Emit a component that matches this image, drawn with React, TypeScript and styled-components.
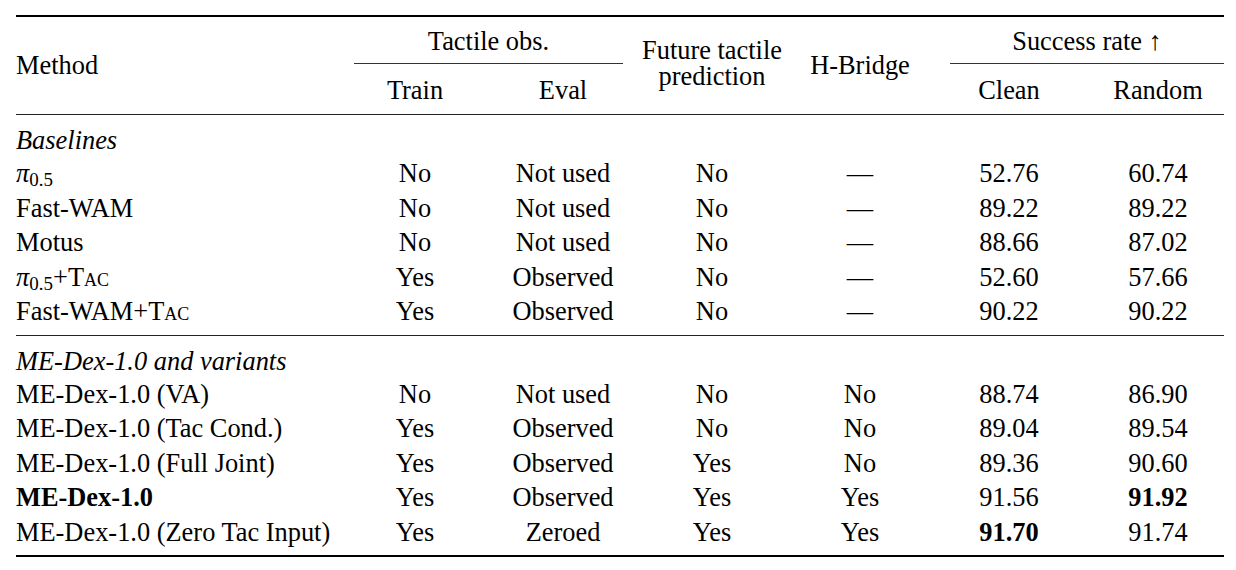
import React from "react";
import styled, { createGlobalStyle } from "styled-components";

const SERIF = `"Liberation Serif", Tinos, "Times New Roman", Times, "Nimbus Roman", "DejaVu Serif", serif`;

const Global = createGlobalStyle`
  html, body { margin: 0; padding: 0; background: #fff; }
  body { font-family: ${SERIF}; color: #000; }
`;

const Page = styled.div`
  padding: 15px 12px 0 16px;
  width: 1236px;
  box-sizing: border-box;
  font-family: ${SERIF};
`;

const Table = styled.table`
  width: 1208px;
  table-layout: fixed;
  border-collapse: collapse;
  font-family: ${SERIF};
  font-size: 26.4px;
  color: #000;
`;

const Head = styled.thead`
  border-top: 2px solid #000;
  border-bottom: 1px solid #222;
`;

const Body = styled.tbody<{ $last?: boolean }>`
  border-bottom: ${(p) => (p.$last ? "2px solid #000" : "1px solid #222")};
  & > tr:last-child > td { padding-bottom: 6px; }
`;

const Th = styled.th<{ $align?: string; $pl?: number; $pb?: number }>`
  font-weight: normal;
  font-family: ${SERIF};
  padding: 0 0 ${(p) => p.$pb ?? 0}px ${(p) => p.$pl ?? 0}px;
  text-align: ${(p) => p.$align ?? "center"};
  vertical-align: middle;
  line-height: 26.4px;
  white-space: nowrap;
`;

const SubTh = styled(Th)`
  height: 48px;
  line-height: 48px;
  padding-top: 2px;
  box-sizing: border-box;
`;

const GroupHead = styled.div<{ $ml: number; $mr: number }>`
  height: 47px;
  box-sizing: border-box;
  padding-top: 3px;
  display: flex;
  align-items: center;
  justify-content: center;
  border-bottom: 1px solid #333;
  margin: 0 ${(p) => p.$mr}px 0 ${(p) => p.$ml}px;
`;

const Td = styled.td<{ $align?: string; $bold?: boolean; $pl?: number }>`
  padding: 0 0 0 ${(p) => p.$pl ?? 0}px;
  height: 34.5px;
  line-height: 34.5px;
  font-family: ${SERIF};
  text-align: ${(p) => p.$align ?? "center"};
  font-weight: ${(p) => (p.$bold ? "bold" : "normal")};
  white-space: nowrap;
  vertical-align: middle;
`;

const GroupLabel = styled.td`
  padding: 9px 0 0 0;
  line-height: 32px;
  font-style: italic;
  font-family: ${SERIF};
  white-space: nowrap;
`;

const Pi = styled.span`
  font-style: italic;
`;

const Sub = styled.span`
  font-size: 0.72em;
  line-height: 0;
  vertical-align: -0.22em;
`;

const SmallCaps = styled.span`
  font-variant: small-caps;
  line-height: 0;
`;

const Bold = styled.span`
  font-weight: bold;
`;

type Row = {
  name: React.ReactNode;
  train: string;
  evalv: string;
  future: string;
  bridge: string;
  clean: string;
  random: string;
  cleanBold?: boolean;
  randomBold?: boolean;
};

const PiHalf = () => (
  <>
    <Pi>π</Pi>
    <Sub>0.5</Sub>
  </>
);

const baselines: Row[] = [
  { name: <PiHalf />, train: "No", evalv: "Not used", future: "No", bridge: "—", clean: "52.76", random: "60.74" },
  { name: "Fast-WAM", train: "No", evalv: "Not used", future: "No", bridge: "—", clean: "89.22", random: "89.22" },
  { name: "Motus", train: "No", evalv: "Not used", future: "No", bridge: "—", clean: "88.66", random: "87.02" },
  {
    name: (
      <>
        <PiHalf />+<SmallCaps>Tac</SmallCaps>
      </>
    ),
    train: "Yes", evalv: "Observed", future: "No", bridge: "—", clean: "52.60", random: "57.66",
  },
  {
    name: (
      <>
        Fast-WAM+<SmallCaps>Tac</SmallCaps>
      </>
    ),
    train: "Yes", evalv: "Observed", future: "No", bridge: "—", clean: "90.22", random: "90.22",
  },
];

const variants: Row[] = [
  { name: "ME-Dex-1.0 (VA)", train: "No", evalv: "Not used", future: "No", bridge: "No", clean: "88.74", random: "86.90" },
  { name: "ME-Dex-1.0 (Tac Cond.)", train: "Yes", evalv: "Observed", future: "No", bridge: "No", clean: "89.04", random: "89.54" },
  { name: "ME-Dex-1.0 (Full Joint)", train: "Yes", evalv: "Observed", future: "Yes", bridge: "No", clean: "89.36", random: "90.60" },
  { name: <Bold>ME-Dex-1.0</Bold>, train: "Yes", evalv: "Observed", future: "Yes", bridge: "Yes", clean: "91.56", random: "91.92", randomBold: true },
  { name: "ME-Dex-1.0 (Zero Tac Input)", train: "Yes", evalv: "Zeroed", future: "Yes", bridge: "Yes", clean: "91.70", random: "91.74", cleanBold: true },
];

const DataRow = ({ r }: { r: Row }) => (
  <tr>
    <Td $align="left">{r.name}</Td>
    <Td>{r.train}</Td>
    <Td>{r.evalv}</Td>
    <Td>{r.future}</Td>
    <Td>{r.bridge}</Td>
    <Td $bold={r.cleanBold}>{r.clean}</Td>
    <Td $bold={r.randomBold} $pl={8}>{r.random}</Td>
  </tr>
);

export default function App() {
  return (
    <Page>
      <Global />
      <Table>
        <colgroup>
          <col style={{ width: 326 }} />
          <col style={{ width: 146 }} />
          <col style={{ width: 150 }} />
          <col style={{ width: 148 }} />
          <col style={{ width: 148 }} />
          <col style={{ width: 150 }} />
          <col style={{ width: 140 }} />
        </colgroup>
        <Head>
          <tr>
            <Th rowSpan={2} $align="left">Method</Th>
            <Th colSpan={2}>
              <GroupHead $ml={12} $mr={15}>Tactile obs.</GroupHead>
            </Th>
            <Th rowSpan={2} $pb={5}>
              Future tactile
              <br />
              prediction
            </Th>
            <Th rowSpan={2}>H-Bridge</Th>
            <Th colSpan={2}>
              <GroupHead $ml={16} $mr={0}>Success rate ↑</GroupHead>
            </Th>
          </tr>
          <tr>
            <SubTh>Train</SubTh>
            <SubTh>Eval</SubTh>
            <SubTh>Clean</SubTh>
            <SubTh $pl={8}>Random</SubTh>
          </tr>
        </Head>
        <Body>
          <tr>
            <GroupLabel colSpan={7}>Baselines</GroupLabel>
          </tr>
          {baselines.map((r, i) => (
            <DataRow key={i} r={r} />
          ))}
        </Body>
        <Body $last>
          <tr>
            <GroupLabel colSpan={7}>ME-Dex-1.0 and variants</GroupLabel>
          </tr>
          {variants.map((r, i) => (
            <DataRow key={i} r={r} />
          ))}
        </Body>
      </Table>
    </Page>
  );
}
